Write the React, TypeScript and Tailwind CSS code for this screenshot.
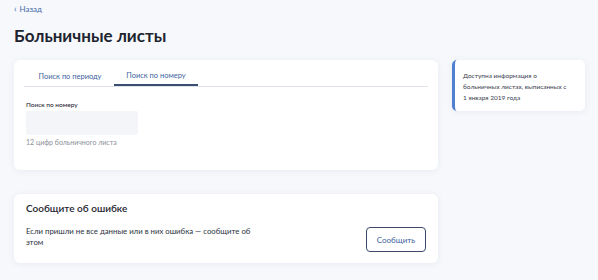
import React from 'react';

const App: React.FC = () => {
  return (
    <div className="w-[598px] h-[280px] overflow-hidden bg-[#f6f8fb] text-[#1f2633]" style={{ fontFamily: 'Lato, "Noto Sans", sans-serif' }}>
      <div className="pl-[14px] pt-[4px]">
        <a className="flex items-center gap-[3px] text-[8px] leading-[10px] text-[#4569a8]">
          <span className="text-[9px] leading-[10px]">‹</span>
          <span>Назад</span>
        </a>
        <h1 className="mt-[12px] text-[17px] leading-[20px] font-bold text-[#1e2430]">Больничные листы</h1>

        <div className="mt-[14px] flex gap-[14px]">
          <div className="w-[424px] flex flex-col gap-[24px]">
            {/* search card */}
            <div className="bg-white rounded-[6px] shadow-[0_1px_6px_rgba(100,120,160,0.10)] px-[10px] pt-[7px] h-[110px]">
              <div className="flex pl-[4px] border-b border-[#dfe3e9]">
                <button className="w-[84px] h-[19px] text-[7.5px] text-[#3d5f9e] text-center">Поиск по периоду</button>
                <button className="ml-[2px] w-[84px] h-[19px] text-[7.5px] text-[#3d5f9e] text-center border-b-[2px] border-[#3b4e72] -mb-px">Поиск по номеру</button>
              </div>
              <div className="px-[2px] pt-[14px]">
                <div className="text-[6.5px] leading-[8px] font-medium text-[#1f2633]">Поиск по номеру</div>
                <div className="mt-[2px] w-[112px] h-[24px] bg-[#f3f5f8] rounded-[2px]" />
                <div className="mt-[2px] text-[7px] leading-[10px] text-[#8a909a]">12 цифр больничного листа</div>
              </div>
            </div>

            {/* error card */}
            <div className="bg-white rounded-[6px] shadow-[0_1px_6px_rgba(100,120,160,0.10)] px-[12px] pt-[7px] h-[69px] flex flex-col">
              <div className="text-[10px] leading-[14px] font-semibold text-[#1e2430]">Сообщите об ошибке</div>
              <div className="mt-[11px] flex items-start justify-between">
                <p className="w-[232px] text-[7.8px] leading-[11px] text-[#2a3140]">Если пришли не все данные или в них ошибка — сообщите об этом</p>
                <button className="mt-[1px] w-[60px] h-[25px] rounded-[4px] border border-[#3b4a6b] text-[8px] text-[#3d5f9e]">Сообщить</button>
              </div>
            </div>
          </div>

          <aside className="w-[133px]">
            <div className="bg-white rounded-[5px] border-l-[3px] border-[#4f7fd0] shadow-[0_1px_6px_rgba(100,120,160,0.10)] pl-[8px] pr-[14px] pt-[10px] pb-[8px]">
              <p className="text-[6.5px] leading-[11px] text-[#3a4150]">Доступна информация о больничных листах, выписанных с 1 января 2019 года</p>
            </div>
          </aside>
        </div>
      </div>
    </div>
  );
};

export default App;
